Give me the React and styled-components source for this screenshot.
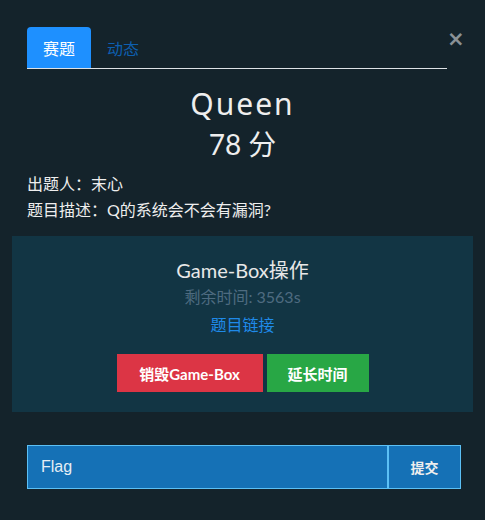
import React, { useState } from "react";
import styled, { createGlobalStyle } from "styled-components";

const Global = createGlobalStyle`
  html, body { margin: 0; padding: 0; background: #14232b; }
  body { font-family: Lato, "Noto Sans CJK SC", sans-serif; color: #eeeeee; }
`;

const Page = styled.div`
  width: 485px;
  height: 520px;
  box-sizing: border-box;
  padding: 27px 12px 0;
  background: #14232b;
`;

const Head = styled.div`
  display: flex;
  align-items: flex-start;
  padding: 0 13px 0 15px;
`;

const Tabs = styled.div`
  flex: 1;
  display: flex;
  border-bottom: 1px solid #dee2e6;
  height: 41px;
`;

const Tab = styled.div`
  width: 64px;
  display: flex;
  align-items: center;
  justify-content: center;
  border-radius: 4px 4px 0 0;
  font-size: 16px;
  color: ${p => (p.active ? "#ffffff" : "#0d5fb0")};
  background: ${p => (p.active ? "#1e90ff" : "transparent")};
  cursor: pointer;
`;

const Close = styled.span`
  width: 13px;
  margin-top: 2px;
  font-family: "DejaVu Sans", sans-serif;
  font-weight: bold;
  font-size: 21px;
  line-height: 1;
  color: #8a9196;
  text-align: right;
`;

const Title = styled.h2`
  margin: 16px 0 0;
  text-align: center;
  font-family: "Noto Sans", sans-serif;
  font-weight: 400;
  font-size: 30px;
  line-height: 37px;
  letter-spacing: 2px;
`;

const Score = styled.h3`
  margin: 4px 0 0;
  text-align: center;
  font-weight: 400;
  font-size: 28px;
  line-height: 36px;
`;

const Info = styled.div`
  padding: 0 15px;
  margin-top: 9px;
  font-size: 16px;
  line-height: 26px;
`;

const Box = styled.div`
  margin-top: 13px;
  height: 176px;
  background: #123544;
  display: flex;
  flex-direction: column;
  align-items: center;
  padding-top: 20px;
  box-sizing: border-box;
`;

const BoxTitle = styled.div`
  font-size: 20px;
  line-height: 28px;
  color: #e8e8e8;
`;

const Remain = styled.div`
  font-size: 16px;
  line-height: 24px;
  margin-top: 1px;
  color: #4e6b80;
`;

const Link = styled.a`
  font-size: 16px;
  line-height: 24px;
  margin-top: 4px;
  color: #1f8ae8;
  text-decoration: none;
`;

const Buttons = styled.div`
  display: flex;
  gap: 4px;
  margin-top: 17px;
`;

const Btn = styled.button`
  height: 38px;
  width: ${p => p.w}px;
  border: 0;
  background: ${p => p.bg};
  color: #fff;
  font-family: Lato, "Noto Sans CJK SC", sans-serif;
  font-weight: 700;
  font-size: 15px;
  cursor: pointer;
`;

const FlagRow = styled.form`
  display: flex;
  margin: 33px 12px 0 15px;
  height: 44px;
`;

const FlagInput = styled.input`
  flex: 1;
  min-width: 0;
  box-sizing: border-box;
  border: 1px solid #5cc0f5;
  border-right: 2px solid #5cc0f5;
  background: #1571b6;
  color: #eeeeee;
  font-family: "Liberation Sans", "Noto Sans CJK SC", sans-serif;
  font-size: 16px;
  padding: 0 13px;
  outline: none;
  &::placeholder { color: #e6eef5; }
`;

const Submit = styled.button`
  width: 72px;
  box-sizing: border-box;
  border: 1px solid #5cc0f5;
  border-left: 0;
  background: #1571b6;
  color: #eeeeee;
  font-family: "Noto Sans CJK SC", sans-serif;
  font-weight: 700;
  font-size: 14px;
  cursor: pointer;
`;

const App = () => {
  const [tab, setTab] = useState(0);
  const [flag, setFlag] = useState("");

  return (
    <Page>
      <Global />
      <Head>
        <Tabs>
          <Tab active={tab === 0} onClick={() => setTab(0)}>赛题</Tab>
          <Tab active={tab === 1} onClick={() => setTab(1)}>动态</Tab>
        </Tabs>
        <Close>×</Close>
      </Head>
      <Title>Queen</Title>
      <Score>78 分</Score>
      <Info>
        <div>出题人：末心</div>
        <div>题目描述：Q的系统会不会有漏洞?</div>
      </Info>
      <Box>
        <BoxTitle>Game-Box操作</BoxTitle>
        <Remain>剩余时间: 3563s</Remain>
        <Link href="#">题目链接</Link>
        <Buttons>
          <Btn w={146} bg="#dc3545">销毁Game-Box</Btn>
          <Btn w={102} bg="#28a745">延长时间</Btn>
        </Buttons>
      </Box>
      <FlagRow onSubmit={e => e.preventDefault()}>
        <FlagInput placeholder="Flag" value={flag} onChange={e => setFlag(e.target.value)} />
        <Submit type="submit">提交</Submit>
      </FlagRow>
    </Page>
  );
};

export default App;
